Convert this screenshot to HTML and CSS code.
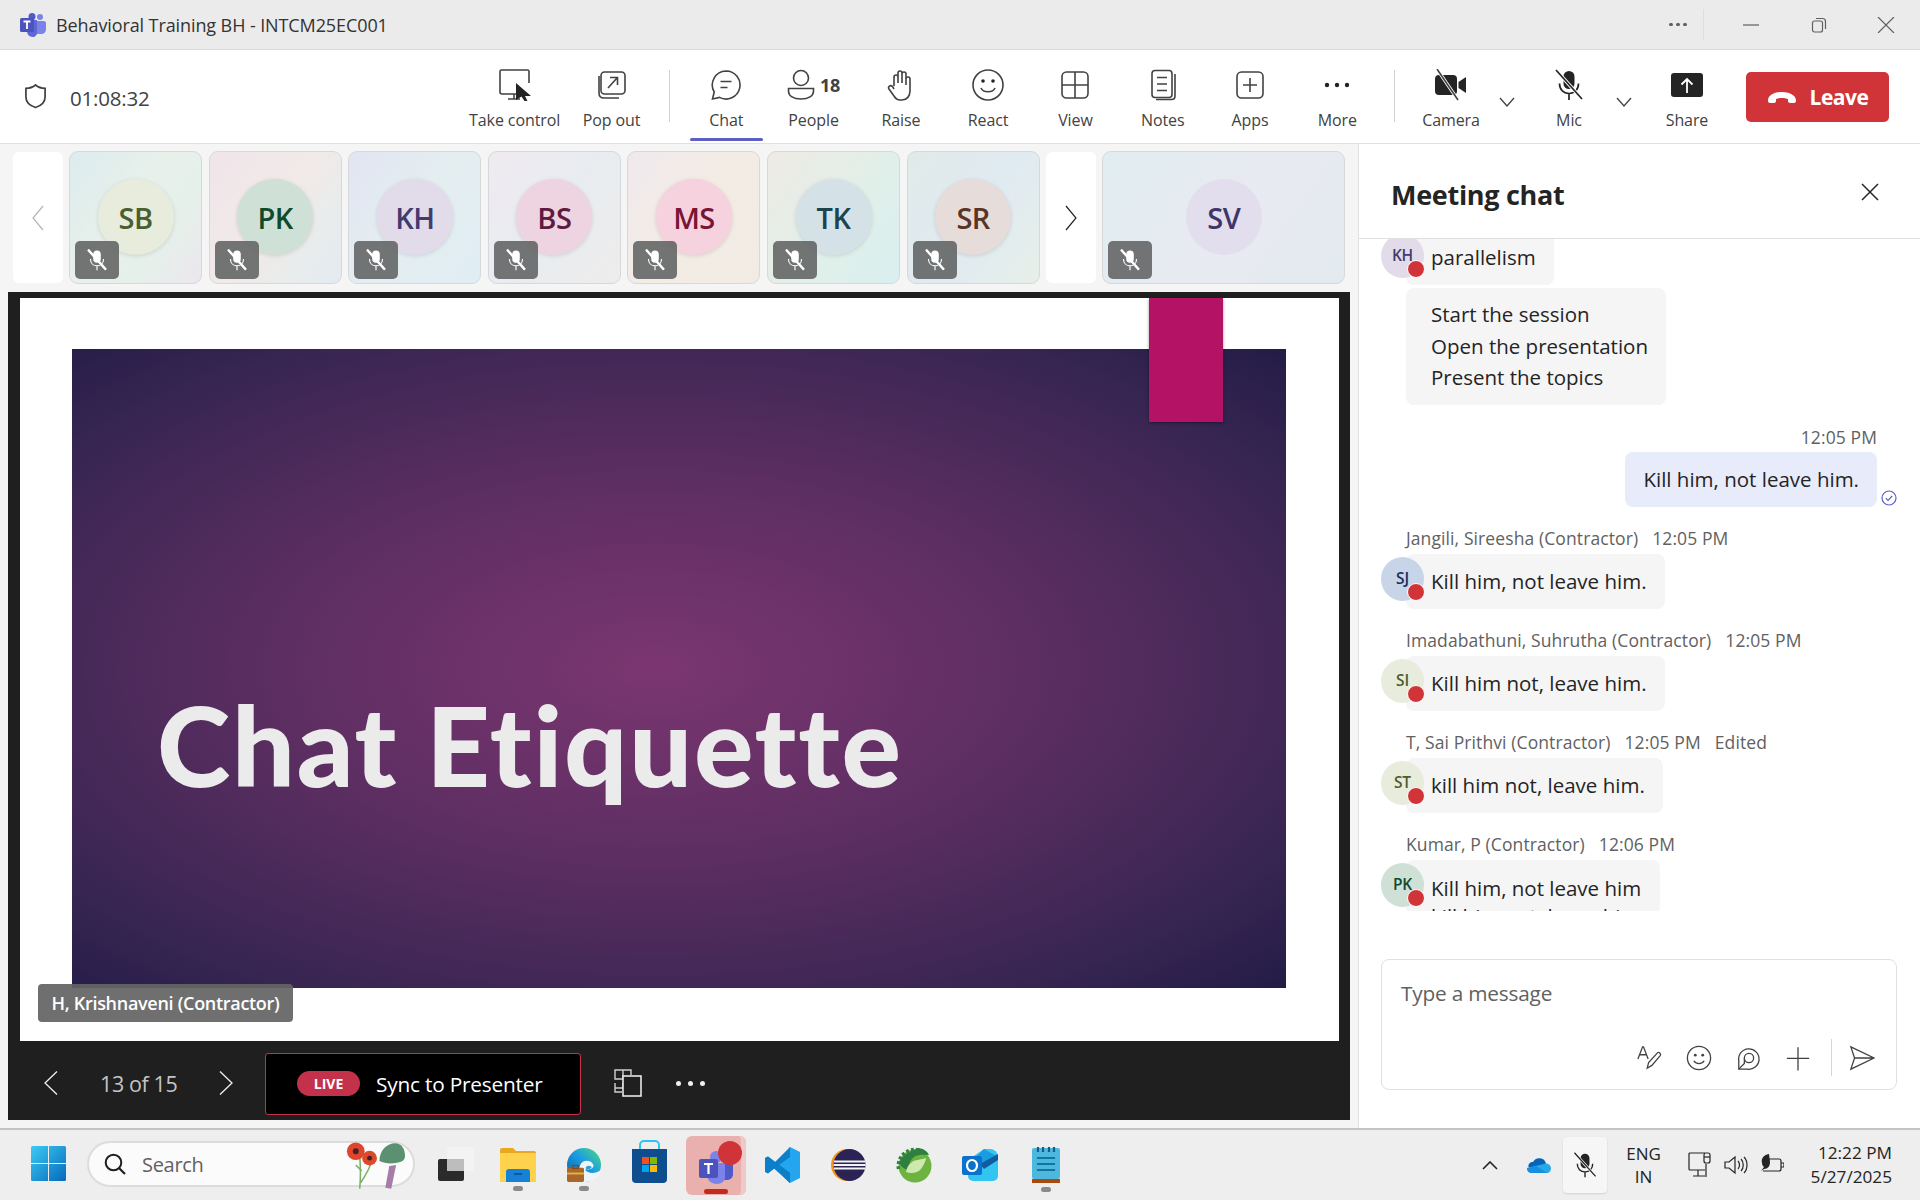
FILE: index.html
```html
<!DOCTYPE html>
<html lang="en">
<head>
<meta charset="utf-8">
<title>Behavioral Training BH - INTCM25EC001</title>
<link rel="stylesheet" href="styles.css">
</head>
<body>
<svg class="defs" aria-hidden="true">
  <symbol id="i-micoff" viewBox="0 0 32 32">
    <rect x="10.5" y="2" width="11" height="18" rx="5.5" fill="currentColor"/>
    <path d="M6.5 14.5c0 6 4 10 9.5 10s9.500-4 9.500-10M16 24.500V31" fill="none" stroke="currentColor" stroke-width="1.700"/>
    <path d="M3 1l26 29" stroke="#fff" stroke-width="3.400" class="slash"/>
    <path d="M3 1l26 29" stroke="currentColor" stroke-width="1.700"/>
  </symbol>
</svg>

<header class="titlebar">
  <svg class="teams-logo" viewBox="0 0 26 24"><circle cx="20" cy="4" r="3" fill="#7b83eb"/><path d="M15 8h9c1 0 2 1 2 2v6c0 3-2 5-5 5h-6z" fill="#7b83eb"/><circle cx="12" cy="3.500" r="3.500" fill="#5059c9"/><path d="M7 7h10v13c0 2-2 4-4 4-4 0-6-3-6-6z" fill="#5f67d6"/><rect x="0" y="5" width="14" height="14" rx="1.500" fill="#4b53bc"/><path d="M3.500 8.500h7M7 8.500v7.500" stroke="#fff" stroke-width="1.800" fill="none"/></svg>
  <span class="title">Behavioral Training BH - INTCM25EC001</span>
  <div class="win-controls">
    <span class="win-dots"><i></i><i></i><i></i></span>
    <span class="win-sep"></span>
    <svg class="win-ico w-min" viewBox="0 0 16 16"><path d="M0 8h16" stroke="#5f5f5f" stroke-width="1.200"/></svg>
    <svg class="win-ico w-max" viewBox="0 0 16 16"><rect x="1.500" y="4" width="10" height="11" rx="2" fill="none" stroke="#5f5f5f" stroke-width="1.200"/><path d="M5 1.500h6.500a3 3 0 0 1 3 3V12" fill="none" stroke="#5f5f5f" stroke-width="1.200"/></svg>
    <svg class="win-ico w-close" viewBox="0 0 16 16"><path d="M0 0l16 16M16 0L0 16" stroke="#5f5f5f" stroke-width="1.200"/></svg>
  </div>
</header>

<nav class="toolbar">
  <svg class="shield" viewBox="0 0 24 26"><path d="M12 1.500c3 2.500 6 3.500 10 3.500v9c0 5-4 9-10 11C6 23 2 19 2 14V5c4 0 7-1 10-3.500z" fill="none" stroke="#424242" stroke-width="1.800"/></svg>
  <span class="clock">01:08:32</span>
  <div class="tools">
    <div class="tool tool-wide">
      <svg class="tico" viewBox="0 0 32 32"><path d="M21 25H3a2 2 0 0 1-2-2V2.500A1.500 1.500 0 0 1 2.500 1h26A1.500 1.500 0 0 1 30 2.500V14M9 30h12M15 25v5"/><path class="fill" d="M17 14l15 13h-6l2.500 5-3 0-3-4.500L17 31z"/></svg>
      <span>Take control</span>
    </div>
    <div class="tool tool-pop">
      <svg class="tico" viewBox="0 0 32 32"><rect x="5" y="3" width="24" height="22" rx="3.500"/><path d="M3 7v17c0 3 2 5 5 5h15M12 19l9-10M14 8.500h7.500V16"/></svg>
      <span>Pop out</span>
    </div>
    <span class="tsep"></span>
    <div class="tool tool-chat">
      <svg class="tico" viewBox="0 0 32 32"><path d="M16 2a14 14 0 1 1-6.500 26.400L2.500 30l1.700-7A14 14 0 0 1 16 2z"/><path d="M10.500 12.500h11M10.500 18.500h7"/></svg>
      <span>Chat</span>
      <i class="active-bar"></i>
    </div>
    <div class="tool">
      <div class="tool-top">
        <svg class="tico tico-p" viewBox="0 0 28 32"><circle cx="14" cy="9" r="7.500"/><path d="M1.500 19.500h25V22c0 5-5 8-12.500 8S1.500 27 1.500 22z"/></svg>
        <b class="count">18</b>
      </div>
      <span>People</span>
    </div>
    <div class="tool">
      <svg class="tico" viewBox="0 0 32 32"><path d="M9 17V8a2 2 0 0 1 4 0v6M13 14V4a2 2 0 0 1 4 0v10M17 14V5a2 2 0 0 1 4 0v11M21 16v-6a2 2 0 0 1 4 0v12c0 5-3 9-8 9h-2c-3 0-4.500-1.500-6-4l-5-7c-1.500-2.500 1.500-4.500 3.500-2.500L9 20"/></svg>
      <span>Raise</span>
    </div>
    <div class="tool">
      <svg class="tico" viewBox="0 0 32 32"><circle cx="16" cy="16" r="15"/><path d="M9 19c2 5 12 5 14 0"/><circle class="fill" cx="11" cy="12" r="1.800"/><circle class="fill" cx="21" cy="12" r="1.800"/></svg>
      <span>React</span>
    </div>
    <div class="tool">
      <svg class="tico" viewBox="0 0 32 32"><rect x="3" y="3" width="26" height="26" rx="4.500"/><path d="M16 3v26M3 16h26"/></svg>
      <span>View</span>
    </div>
    <div class="tool">
      <svg class="tico" viewBox="0 0 32 32"><rect x="5" y="1.500" width="20" height="27" rx="3"/><path d="M28 5v22c0 2-1.500 3.500-3.500 3.500H9M10 8.500h10M10 15h10M10 21.500h10"/></svg>
      <span>Notes</span>
    </div>
    <div class="tool">
      <svg class="tico" viewBox="0 0 32 32"><rect x="3" y="3" width="26" height="26" rx="4.500"/><path d="M16 9v14M9 16h14"/></svg>
      <span>Apps</span>
    </div>
    <div class="tool">
      <svg class="tico" viewBox="0 0 32 32"><circle class="fill" cx="6" cy="16" r="2.200"/><circle class="fill" cx="16" cy="16" r="2.200"/><circle class="fill" cx="26" cy="16" r="2.200"/></svg>
      <span>More</span>
    </div>
    <span class="tsep tsep2"></span>
    <div class="tool tool-cam">
      <svg class="tico" viewBox="0 0 32 32"><rect class="fill" x="0" y="6" width="22" height="20" rx="4"/><path class="fill" d="M23.500 13L31 8v16l-7.500-5z"/><path class="halo" d="M2 0l21 31"/><path d="M2 0l21 31"/></svg>
      <span>Camera</span>
    </div>
    <svg class="caret" viewBox="0 0 16 10"><path d="M1 1l7 8 7-8" fill="none" stroke="#424242" stroke-width="1.300"/></svg>
    <div class="tool tool-mic">
      <svg class="tico-mic" viewBox="0 0 32 32"><use href="#i-micoff"/></svg>
      <span>Mic</span>
    </div>
    <svg class="caret" viewBox="0 0 16 10"><path d="M1 1l7 8 7-8" fill="none" stroke="#424242" stroke-width="1.300"/></svg>
    <div class="tool tool-share">
      <svg class="tico" viewBox="0 0 32 32"><rect class="fill" x="0" y="4" width="32" height="24" rx="3"/><path class="white" d="M16 24V10M10.500 15.500L16 10l5.500 5.500"/></svg>
      <span>Share</span>
    </div>
    <button class="leave"><svg viewBox="0 0 30 13"><path fill="#fff" d="M1 9.500C1 4 8 1 15 1s14 3 14 8.500V10c0 1-1 2-2 2h-4c-1 0-2-1-2-2V8c-3-1.500-9-1.500-12 0v2c0 1-1 2-2 2H3c-1 0-2-1-2-2z"/></svg>Leave</button>
  </div>
</nav>

<main class="main">
  <section class="left">
    <div class="strip">
      <div class="nav-btn"><svg viewBox="0 0 12 26"><path d="M11 1L1 13l10 12" fill="none" stroke="#b5b5b5" stroke-width="1.200"/></svg></div>
      <div class="thumb t1"><span class="ava a-sb">SB</span><span class="mute"><svg viewBox="0 0 32 32"><use href="#i-micoff"/></svg></span></div>
      <div class="thumb t2"><span class="ava a-pk">PK</span><span class="mute"><svg viewBox="0 0 32 32"><use href="#i-micoff"/></svg></span></div>
      <div class="thumb t3"><span class="ava a-kh">KH</span><span class="mute"><svg viewBox="0 0 32 32"><use href="#i-micoff"/></svg></span></div>
      <div class="thumb t4"><span class="ava a-bs">BS</span><span class="mute"><svg viewBox="0 0 32 32"><use href="#i-micoff"/></svg></span></div>
      <div class="thumb t5"><span class="ava a-ms">MS</span><span class="mute"><svg viewBox="0 0 32 32"><use href="#i-micoff"/></svg></span></div>
      <div class="thumb t6"><span class="ava a-tk">TK</span><span class="mute"><svg viewBox="0 0 32 32"><use href="#i-micoff"/></svg></span></div>
      <div class="thumb t7"><span class="ava a-sr">SR</span><span class="mute"><svg viewBox="0 0 32 32"><use href="#i-micoff"/></svg></span></div>
      <div class="nav-btn"><svg viewBox="0 0 12 26"><path d="M1 1l10 12L1 25" fill="none" stroke="#242424" stroke-width="1.200"/></svg></div>
      <div class="thumb thumb-wide t8"><span class="ava a-sv">SV</span><span class="mute"><svg viewBox="0 0 32 32"><use href="#i-micoff"/></svg></span></div>
    </div>

    <div class="stage">
      <div class="slide">
        <div class="deck"><h1 class="deck-title">Chat Etiquette</h1></div>
        <div class="bookmark"></div>
        <div class="nametag">H, Krishnaveni (Contractor)</div>
      </div>
      <div class="slidebar">
        <svg class="sb-chev" viewBox="0 0 14 24"><path d="M13 0.500L1 12l12 11.500" fill="none" stroke="#f0f0f0" stroke-width="1.300"/></svg>
        <span class="pages">13 of 15</span>
        <svg class="sb-chev sb-next" viewBox="0 0 14 24"><path d="M1 0.500L13 12 1 23.500" fill="none" stroke="#f0f0f0" stroke-width="1.300"/></svg>
        <div class="sync"><span class="live">LIVE</span><span>Sync to Presenter</span></div>
        <svg class="sb-grid" viewBox="0 0 28 28"><path d="M9 10H1V1h8zM9 6V1h8v5M1 19h8v-5M1 14v9h7" fill="none" stroke="#d0d0d0" stroke-width="1.400"/><rect x="9" y="7" width="18" height="20" fill="#1f1f1f" stroke="#e8e8e8" stroke-width="1.600"/></svg>
        <span class="sb-dots"><i></i><i></i><i></i></span>
      </div>
    </div>
  </section>

  <aside class="chat">
    <div class="chat-head">
      <h2>Meeting chat</h2>
      <svg viewBox="0 0 18 18"><path d="M1 1l16 16M17 1L1 17" stroke="#242424" stroke-width="1.500"/></svg>
    </div>
    <div class="msgs">
      <div class="msg msg-first">
        <span class="cava cava-first c-kh">KH<i class="dot"></i></span>
        <div class="bubble b-first">parallelism</div>
      </div>
      <div class="msg"><div class="bubble b-multi">Start the session<br>Open the presentation<br>Present the topics</div></div>
      <div class="mine-time">12:05 PM</div>
      <div class="mine">
        <div class="bubble bubble-me">Kill him, not leave him.</div>
        <svg class="seen" viewBox="0 0 16 16"><circle cx="8" cy="8" r="7" fill="none" stroke="#5b5fc7" stroke-width="1.200"/><path d="M4.800 8.200l2.200 2.200 4.200-4.400" fill="none" stroke="#5b5fc7" stroke-width="1.200"/></svg>
      </div>
      <div class="meta">Jangili, Sireesha (Contractor)<span>12:05 PM</span></div>
      <div class="msg">
        <span class="cava c-sj">SJ<i class="dot"></i></span>
        <div class="bubble">Kill him, not leave him.</div>
      </div>
      <div class="meta">Imadabathuni, Suhrutha (Contractor)<span>12:05 PM</span></div>
      <div class="msg">
        <span class="cava c-si">SI<i class="dot"></i></span>
        <div class="bubble">Kill him not, leave him.</div>
      </div>
      <div class="meta">T, Sai Prithvi (Contractor)<span>12:05 PM</span><span>Edited</span></div>
      <div class="msg">
        <span class="cava c-st">ST<i class="dot"></i></span>
        <div class="bubble">kill him not, leave him.</div>
      </div>
      <div class="meta">Kumar, P (Contractor)<span>12:06 PM</span></div>
      <div class="msg msg-last">
        <span class="cava c-pk">PK<i class="dot"></i></span>
        <div class="bubble">Kill him, not leave him<br>kill him not, leave him</div>
      </div>
    </div>
    <div class="compose">
      <div class="placeholder">Type a message</div>
      <div class="compose-tools">
        <svg class="cico" viewBox="0 0 28 28"><path d="M1 15L6 2h1l5 13M3 10.500h7"/><path d="M11 25l1.500-6L22 8.500c1.500-1.500 4.500 1 3 3L16 22z"/></svg>
        <svg class="cico" viewBox="0 0 28 28"><circle cx="14" cy="14" r="12.500"/><path d="M8.500 17c2 4 9 4 11 0"/><circle class="cfill" cx="10" cy="11" r="1.500"/><circle class="cfill" cx="18" cy="11" r="1.500"/></svg>
        <svg class="cico" viewBox="0 0 28 28"><path d="M3 26v-9a11 11 0 1 1 9 9z"/><circle cx="14" cy="14" r="5"/><path d="M9 14v6l-6 6"/></svg>
        <svg class="cico" viewBox="0 0 28 28"><path d="M14 2.500v25M2 14.500h24"/></svg>
        <span class="csep"></span>
        <svg class="cico cico-send" viewBox="0 0 28 28"><path d="M2 2l25 12L2 26l4-12zM6 14h21"/></svg>
      </div>
    </div>
  </aside>
</main>

<footer class="taskbar">
  <svg class="start" viewBox="0 0 35 35"><defs><linearGradient id="g-win" x1="0" y1="0" x2="1" y2="1"><stop offset="0" stop-color="#3ccbf4"/><stop offset="1" stop-color="#0669bc"/></linearGradient></defs><path fill="url(#g-win)" d="M0 1.500A1.500 1.500 0 0 1 1.500 0H17v17H0zM18 0h15.500A1.500 1.500 0 0 1 35 1.500V17H18zM0 18h17v17H1.500A1.500 1.500 0 0 1 0 33.500zM18 18h17v15.500a1.500 1.500 0 0 1-1.500 1.500H18z"/></svg>
  <div class="search">
    <svg class="s-ico" viewBox="0 0 22 22"><circle cx="9.500" cy="9.500" r="7.800" fill="none" stroke="#1f1f1f" stroke-width="2"/><path d="M15 15l6 6" stroke="#1f1f1f" stroke-width="2.200"/></svg>
    <span class="s-text">Search</span>
    <svg class="s-art" viewBox="0 0 64 50"><path d="M18 14c1 14 1 24 0 34M31 18c-3 10-8 18-12 24M20 30c-2-2-4-4-6-6" fill="none" stroke="#7fb069" stroke-width="1.600"/><circle cx="14" cy="10" r="9" fill="#e0452c"/><circle cx="14" cy="10" r="3" fill="#41212b"/><circle cx="28" cy="17" r="7.500" fill="#dc4a2c"/><circle cx="28" cy="17" r="2.500" fill="#41212b"/><path d="M38 20c0-11 8-18 16-18 6 0 10 5 10 13 0 3-2 5-5 6-6 2-15 2-21-1z" fill="#5b9070"/><path d="M48 25l-4 22 6 1 5-24z" fill="#a77ca8"/></svg>
  </div>
  <svg class="tb tb-view" viewBox="0 0 36 34"><rect x="0" y="12" width="26" height="22" rx="2" fill="#2b2b2b"/><rect x="9" y="0" width="27" height="24" rx="2" fill="#f3f3f3"/><rect x="9" y="12" width="17" height="12" fill="#bdbdbd"/></svg>
  <div class="app"><svg class="tb" viewBox="0 0 36 34"><path d="M0 2a2 2 0 0 1 2-2h11l3 3h18a2 2 0 0 1 2 2v29H0z" fill="#e9a820"/><rect x="0" y="5" width="36" height="29" rx="1" fill="#ffd24d"/><path d="M6 34V24a3 3 0 0 1 3-3h18a3 3 0 0 1 3 3v10z" fill="#1582d8"/><path d="M14 26h8" stroke="#0b4f8a" stroke-width="1.600"/></svg><i class="run"></i></div>
  <div class="app"><svg class="tb" viewBox="0 0 36 36"><defs><linearGradient id="g-edge" x1="0" y1="1" x2="1" y2="0"><stop offset="0" stop-color="#0c59a4"/><stop offset=".55" stop-color="#1b9de2"/><stop offset="1" stop-color="#4fdc7c"/></linearGradient></defs><circle cx="18" cy="18" r="18" fill="url(#g-edge)"/><path d="M14 18c2-6 12-6 14 0 1 4-5 5-9 5 3 4 11 5 17 0-1 7-8 13-17 13-2 0-4-1-5-3-2-4-2-10 0-15z" fill="#eef5f8"/><path d="M20 20c3-2 6-1 6 1-1 1-4 2-6 2z" fill="#2aa0d8"/><rect x="0" y="21" width="18" height="15" rx="1.500" fill="#a9672a"/><rect x="0" y="26" width="18" height="2" fill="#e8b04a"/><rect x="6" y="18.500" width="6" height="3" fill="none" stroke="#7c4a1c" stroke-width="1.200"/></svg><i class="run"></i></div>
  <div class="app"><svg class="tb tb-store" viewBox="0 0 35 44"><path d="M8 10V5a4 4 0 0 1 4-4h11a4 4 0 0 1 4 4v5" fill="none" stroke="#2ec4f0" stroke-width="2"/><path d="M0 9h35v30a4 4 0 0 1-4 4H4a4 4 0 0 1-4-4z" fill="#0f4e8e"/><rect x="10" y="17" width="7" height="7" fill="#f25022"/><rect x="18" y="17" width="7" height="7" fill="#7fba00"/><rect x="10" y="25" width="7" height="7" fill="#00a4ef"/><rect x="18" y="25" width="7" height="7" fill="#ffb900"/></svg></div>
  <div class="teams-app">
    <svg class="tb-teams" viewBox="0 0 36 36"><circle cx="26" cy="10" r="5" fill="#7b83eb"/><path d="M20 16h14v10c0 4-3 6-7 6h-7z" fill="#5059c9"/><circle cx="17" cy="9" r="6" fill="#7b83eb"/><path d="M8 15h18v15c0 3-4 6-8 6-6 0-10-4-10-9z" fill="#7b83eb"/><rect x="0" y="11" width="19" height="19" rx="2" fill="#4b53bc"/><path d="M5 16h9M9.500 16v10" stroke="#fff" stroke-width="2.200" fill="none"/></svg>
    <i class="badge-red"></i>
    <i class="teams-run"></i>
  </div>
  <svg class="tb tb-code" viewBox="0 0 36 36"><path d="M26 0l10 5v26l-10 5-15-15z" fill="#24a6ee"/><path d="M26 0l-15 15L4 9.500 1 11v14l3 1.500 7-5.500 15 15V26L15 18 26 10z" fill="#0b7fc9"/><path d="M1 11l3-1.500L26 26v10L4 16z M1 25V11l10 7z" fill="#0b7fc9"/></svg>
  <svg class="tb tb-ecl" viewBox="0 0 36 32"><circle cx="17" cy="16" r="16" fill="#f7941e"/><circle cx="19.500" cy="16" r="16" fill="#2b2255"/><path d="M4 12.500h31M3.500 16h32M4 19.500h31" stroke="#f2f2f2" stroke-width="1.800"/></svg>
  <svg class="tb tb-spr" viewBox="0 0 36 36"><circle cx="19" cy="19" r="16.500" fill="#6db33f"/><path d="M3 15c3-3 3-5 6-7 2-2 4-2 6-4 3-1 6-3 8-3 5 1 8 3 10 7-5 0-10-1-15 2-4 3-5 7-6 13-3-1-5-2-7-4-1-1-2-3-2-4z" fill="#2f8040"/><path d="M2.500 22A16.500 16.500 0 0 1 30 7" fill="none" stroke="#2f8040" stroke-width="3.500" stroke-dasharray="2.800 2.200"/><path d="M10 25c5 2 12 1 15-3 3-4 5-9 5-11-4 2-10 1-14 4-4 3-5 6-6 10z" fill="#cfe8b0"/></svg>
  <svg class="tb tb-out" viewBox="0 0 36 32"><path d="M6 11L22 0h6a8 8 0 0 1 8 8v19a5 5 0 0 1-5 5H11a5 5 0 0 1-5-5z" fill="#33c5f2"/><path d="M22 0l14 8-14 9-12-5z" fill="#1a9ce0"/><path d="M18 15L36 5v6l-14 9z" fill="#0f5c9e"/><rect x="0" y="7" width="20" height="19" rx="2" fill="#0a72cb"/><ellipse cx="10" cy="16.500" rx="5" ry="5.500" fill="none" stroke="#fff" stroke-width="2.200"/></svg>
  <div class="app app-note"><svg class="tb tb-note" viewBox="0 0 28 36"><rect x="0" y="1" width="28" height="31" rx="2" fill="#4cb8dd"/><rect x="0" y="32" width="28" height="4" fill="#a8490f"/><path d="M6 0v5M11 0v5M17 0v5M22 0v5" stroke="#135d88" stroke-width="2.200"/><path d="M5 11h18M5 17h18M5 23h18" stroke="#11759f" stroke-width="1.800"/></svg><i class="run"></i></div>

  <div class="tray">
    <svg class="t-chev" viewBox="0 0 16 9"><path d="M1 8l7-7 7 7" fill="none" stroke="#242424" stroke-width="1.600"/></svg>
    <svg class="t-cloud" viewBox="0 0 24 16"><path d="M6 5a7 7 0 0 1 13 1.500L10 13 1.500 10C1 7 3 5 6 5z" fill="#0364b8"/><path d="M19 6.500c3 0 5 2.500 5 5 0 2-1.500 4.500-4 4.500H5c-3 0-5-2-5-5z" fill="#28a8ea"/><path d="M0 11l9-2 11 7H5c-3 0-5-2-5-5z" fill="#1490df"/></svg>
    <div class="t-mic"><svg viewBox="0 0 32 32"><use href="#i-micoff"/></svg></div>
    <div class="t-lang">ENG<br>IN</div>
    <svg class="t-ico t-net" viewBox="0 0 24 26"><path d="M17 18H2a1 1 0 0 1-1-1V2a1 1 0 0 1 1-1h15M5 24h12M10 18v6M18 25V12"/><rect x="16" y="1" width="6" height="10" rx="2"/><path d="M16 5h6"/></svg>
    <svg class="t-ico t-vol" viewBox="0 0 24 22"><path d="M1 8v6h4l6 5V3L5 8zM14 7c2 2 2 6 0 8M17 5c3 3 3 9 0 12M20 3c4 4 4 12 0 16"/></svg>
    <svg class="t-ico t-bat" viewBox="0 0 24 22"><path d="M8 5h11a2 2 0 0 1 2 2v8a2 2 0 0 1-2 2H3M21 9h3v4h-3"/><path class="tfill" d="M9 0C3 1 1 5 2 9c0 2 1 3 2 4l-3 4 3-2c4 0 6-3 6-7z"/></svg>
    <div class="t-clock">12:22 PM<br>5/27/2025</div>
  </div>
</footer>
</body>
</html>
```
FILE: styles.css
```css
* { box-sizing: border-box; }
html, body { margin: 0; height: 100%; }
body {
  width: 1920px; height: 1200px; overflow: hidden;
  display: flex; flex-direction: column;
  font-family: "Open Sans", "Noto Sans", sans-serif;
  color: #242424; background: #f5f5f5;
}
.defs { position: absolute; width: 0; height: 0; }
i { font-style: normal; display: block; }

/* title bar */
.titlebar {
  height: 50px; flex: none; display: flex; align-items: center;
  padding-left: 20px; background: #ebebeb; border-bottom: 1px solid #dcdcdc;
}
.teams-logo { width: 26px; height: 24px; }
.title { margin-left: 10px; font-size: 18px; color: #333; letter-spacing: -.1px; }
.win-controls { margin-left: auto; display: flex; align-items: center; height: 100%; }
.win-dots { display: flex; gap: 3.500px; }
.win-dots i { width: 3.500px; height: 3.500px; border-radius: 50%; background: #5f5f5f; }
.win-sep { width: 1px; height: 31px; background: #dedede; margin-left: 16px; }
.win-ico { width: 16px; height: 16px; }
.w-min { margin-left: 39px; }
.w-max { margin-left: 52px; }
.w-close { margin-left: 50.500px; margin-right: 25px; width: 18px; }

/* toolbar */
.toolbar {
  height: 94px; flex: none; display: flex; align-items: flex-start;
  background: #fff; border-bottom: 1px solid #e0e0e0; padding-right: 31px;
}
.shield { width: 23px; height: 26px; margin: 33px 0 0 24px; }
.clock { margin: 34px 0 0 23px; font-size: 20.500px; line-height: 28px; color: #424242; letter-spacing: -.2px; }
.tools { margin-left: auto; display: flex; align-items: flex-start; }
.tool {
  position: relative; width: 87.300px; height: 93px; padding-top: 19px;
  display: flex; flex-direction: column; align-items: center;
  font-size: 16px; color: #424242; letter-spacing: -.1px;
}
.tool > span { line-height: 20px; margin-top: 8.500px; white-space: nowrap; }
.tool-wide { width: 108px; }
.tool-pop { width: 86px; }
.tool-cam { width: 88px; }
.tool-mic { width: 86px; margin-left: 7px; }
.tool-share { width: 88px; margin-left: 7px; margin-right: 15px; }
.tico, .tico-mic { width: 32px; height: 32px; flex: none; fill: none; stroke: #424242; stroke-width: 1.600; }
.tico-mic { color: #242424; stroke: none; }
.tico .fill { fill: #242424; stroke: none; }
.tico .white { stroke: #fff; stroke-width: 1.800; }
.tico .halo { stroke: #fff; stroke-width: 3.200; }
.tool-top { display: flex; align-items: center; padding-left: 0; }
.tico-p { width: 28px; }
.count { font-size: 18px; font-weight: 700; color: #424242; margin-left: 5px; }
.active-bar { position: absolute; left: 7px; right: 7px; bottom: 2px; height: 3px; border-radius: 2px; background: #5b5fc7; }
.tsep { width: 1px; height: 52px; margin: 20px 13px 0 14px; background: #d1d1d1; flex: none; }
.tsep2 { margin: 20px 12px 0 13px; }
.caret { width: 16px; height: 10px; margin: 47px 4px 0; flex: none; }
.leave {
  width: 143px; height: 50px; margin-top: 22px; padding-top: 2px; border: 0; border-radius: 5px;
  display: flex; align-items: center; justify-content: center; gap: 13px;
  background: #d13438; color: #fff;
  font: 700 21px/1 "Open Sans", sans-serif; letter-spacing: -.5px;
}
.leave svg { width: 30px; height: 13px; }

/* main */
.main { flex: 1; min-height: 0; display: flex; }
.left { width: 1358px; flex: none; padding: 7px 8px 8px; display: flex; flex-direction: column; gap: 8px; background: #f5f5f5; }

.strip { height: 133px; flex: none; display: flex; gap: 6.600px; padding-left: 5px; align-items: center; }
.nav-btn { width: 49.500px; height: 131px; background: #fff; border-radius: 6px; display: flex; align-items: center; justify-content: center; flex: none; }
.nav-btn svg { width: 12px; height: 26px; }
.thumb {
  position: relative; width: 133px; height: 133px; flex: none; border: 1px solid #d6d9dc; border-radius: 9px;
  display: flex; align-items: center; justify-content: center;
}
.thumb-wide { width: 243px; }
.t1 { background: linear-gradient(125deg, #dcecee, #e8f0ea 45%, #e5f0ea 70%, #ece6ee); }
.t2 { background: linear-gradient(125deg, #f0e5ea, #f0eae8 50%, #e8ecec 75%, #e4eaf0); }
.t3 { background: linear-gradient(125deg, #e2e5f2, #e4eef0 50%, #e0edf4); }
.t4 { background: linear-gradient(125deg, #efeaf0, #e8ecf0 50%, #eeecec); }
.t5 { background: linear-gradient(125deg, #efe9ee, #f3ece4 50%, #f2ebe4); }
.t6 { background: linear-gradient(125deg, #eeeae4, #e2efe8 50%, #d9eff0); }
.t7 { background: linear-gradient(125deg, #e0ebe8, #e0eaf2 50%, #e6efe8); }
.t8 { background: linear-gradient(125deg, #e1edf0, #e8eaf0 60%, #e2eaf0); }
.ava {
  width: 76px; height: 76px; border-radius: 50%; display: flex; align-items: center; justify-content: center;
  font-size: 29px; font-weight: 600; letter-spacing: -.5px; box-shadow: 0 1px 4px rgba(0,0,0,.12); margin-top: -1px;
}
.a-sb { background: #e7ecdc; color: #4a5e2f; }
.a-pk { background: #cfe0d6; color: #0e4a2c; }
.a-kh { background: #e2dcea; color: #433b6e; }
.a-bs { background: #edd4e0; color: #5e1a40; }
.a-ms { background: #f5d2de; color: #7a1535; }
.a-tk { background: #d4e2e8; color: #1c4450; }
.a-sr { background: #e6dcd9; color: #5a3525; }
.a-sv { background: #e2deed; color: #3e3668; box-shadow: none; }
.mute {
  position: absolute; left: 5px; bottom: 4px; width: 44px; height: 38px; border-radius: 5px;
  background: rgba(100,102,102,.9); display: flex; align-items: center; justify-content: center; color: #fff;
}
.mute svg { width: 22px; height: 22px; color: #fff; }
.mute svg, .t-mic svg { overflow: visible; }

/* stage */
.stage { flex: 1; min-height: 0; display: flex; flex-direction: column; background: #1f1f1f; padding: 6px 11px 0 12px; }
.slide { position: relative; height: 743px; flex: none; background: #fff; padding: 51px 53px 53px 52px; }
.deck {
  height: 100%; padding: 340px 0 0 85px;
  background: radial-gradient(ellipse at 48% 50%, #7b3670 0%, #5d2e62 42%, #3a2653 78%, #231c47 100%);
}
.deck-title {
  margin: 0; font: 900 111px/1 "Lato", sans-serif; color: #ebebeb; letter-spacing: 1.800px; white-space: nowrap;
}
.bookmark { position: absolute; top: 0; left: 1129px; width: 74px; height: 124px; background: #b41264; box-shadow: 0 1px 3px rgba(0,0,0,.4); }
.nametag {
  position: absolute; left: 18px; bottom: 19px; height: 38px; width: 255px; border-radius: 4px;
  background: rgba(100,100,100,.93); color: #fff; display: flex; align-items: center; justify-content: center;
  font-size: 18px; font-weight: 600; letter-spacing: -.3px; white-space: nowrap;
}
.slidebar { flex: 1; display: flex; align-items: center; color: #fff; margin: 0 -11px 0 -12px; padding-top: 5px; }
.sb-chev { width: 14px; height: 24px; margin-left: 36px; flex: none; }
.pages { margin-left: 42px; font-size: 21.500px; color: #c4c4c4; letter-spacing: -.4px; width: 80px; white-space: nowrap; }
.sb-next { margin-left: 39px; }
.sync {
  margin-left: 32px; width: 316px; height: 62px; flex: none; margin-top: 1px; background: #000; border: 1px solid #c4314b; border-radius: 3px;
  display: flex; align-items: center; padding-left: 31px; gap: 16px; font-size: 20.800px; letter-spacing: -.2px;
}
.live {
  width: 63px; height: 25px; border-radius: 13px; background: #c4314b; display: flex; align-items: center; justify-content: center;
  font-size: 14px; font-weight: 700; letter-spacing: 0;
}
.sb-grid { width: 28px; height: 28px; margin-left: 33px; flex: none; }
.sb-dots { display: flex; gap: 7px; margin-left: 34px; }
.sb-dots i { width: 5px; height: 5px; border-radius: 50%; background: #f0f0f0; }

/* chat */
.chat { flex: 1; min-width: 0; display: flex; flex-direction: column; background: #fff; border-left: 1px solid #e0e0e0; }
.chat-head { height: 95px; flex: none; display: flex; align-items: center; justify-content: space-between; padding: 6px 41px 0 32px; border-bottom: 1px solid #e0e0e0; }
.chat-head h2 { margin: 0; font-size: 27px; font-weight: 700; letter-spacing: -.3px; color: #242424; }
.chat-head svg { width: 18px; height: 18px; margin-top: -4px; }
.msgs { height: 672px; flex: none; overflow: hidden; padding-left: 47px; font-size: 20px; color: #242424; }
.msg { position: relative; display: flex; }
.bubble { background: #f5f5f5; border-radius: 8px; padding: 12px 18px 12px 25px; line-height: 31.500px; font-size: 20.500px; white-space: nowrap; }
.b-first { height: 46px; padding-top: 3px; border-radius: 0 0 8px 8px; }
.b-multi { margin-top: 3px; height: 117px; padding-top: 11px; }
.cava {
  position: absolute; left: -25px; top: 3px; width: 43px; height: 44px; border-radius: 50%; z-index: 1;
  font-size: 15.500px; font-weight: 600; display: flex; align-items: center; justify-content: center; padding-bottom: 2px; letter-spacing: -.2px;
}
.cava-first { top: -5px; }
.dot { position: absolute; right: -1px; bottom: 0; width: 18px; height: 18px; border-radius: 50%; background: #d13438; border: 1.500px solid #fff; }
.c-kh { background: #e2dcea; color: #433b6e; }
.c-sj { background: #c8d5e8; color: #1a2e5e; }
.c-si { background: #e7ecdc; color: #4a5e2f; }
.c-st { background: #e7ecdc; color: #4a5e2f; }
.c-pk { background: #cfe0d6; color: #0e4a2c; }
.mine-time { margin: 22px 43px 0 0; text-align: right; line-height: 20px; font-size: 17.500px; color: #616161; letter-spacing: .1px; }
.mine { position: relative; display: flex; justify-content: flex-end; margin: 5px 43px 0 0; }
.bubble-me { background: #e8ebfa; padding: 12px 18px; height: 55px; }
.seen { position: absolute; right: -20px; bottom: 1px; width: 16px; height: 16px; }
.meta { margin-top: 21px; height: 20px; line-height: 20px; margin-bottom: 6px; font-size: 17.500px; color: #616161; letter-spacing: .1px; white-space: nowrap; }
.meta span { margin-left: 14px; }
.msg > .bubble:not(.b-first):not(.b-multi) { height: 55px; }
.msg.msg-last > .bubble { height: 100px; line-height: 28.500px; padding-top: 13.500px; padding-right: 19px; }
.compose {
  margin: 48px 23px 0 22px; height: 131px; flex: none; border: 1px solid #e0e0e0; border-radius: 8px;
  display: flex; flex-direction: column; padding: 20px 19px 0;
}
.placeholder { font-size: 20.800px; line-height: 26px; color: #616161; letter-spacing: -.2px; }
.compose-tools { margin-top: auto; margin-bottom: 12.500px; display: flex; align-items: center; justify-content: flex-end; height: 38px; }
.cico { width: 26px; height: 26px; fill: none; stroke: #424242; stroke-width: 1.400; margin-left: 23.500px; }
.cico .cfill { fill: #424242; stroke: none; }
.csep { width: 1px; height: 37px; background: #d6d6d6; margin-left: 20px; }
.cico-send { margin-left: 17px; margin-right: 2px; }

/* taskbar */
.taskbar { height: 72px; flex: none; display: flex; align-items: center; background: #eeeeee; border-top: 2px solid #c4c4c4; position: relative; }
.start { width: 35px; height: 35px; margin-left: 31px; flex: none; margin-top: -3px; }
.search {
  margin-left: 21px; width: 328px; height: 46px; border-radius: 23px; background: #fbfbfb; border: 2px solid #dcdcdc; flex: none;
  display: flex; align-items: center; padding-left: 15px; margin-top: -2px;
}
.s-ico { width: 22px; height: 22px; }
.s-text { margin-left: 16px; font-size: 20px; color: #616161; letter-spacing: -.3px; }
.s-art { width: 63px; height: 50px; margin-left: auto; margin-right: 8px; margin-top: 4px; }
.tb { display: block; width: 36px; height: 34px; flex: none; }
.tb-view { margin-left: 22.500px; margin-top: -2px; }
.app { position: relative; flex: none; margin-left: 30px; }
.run { position: absolute; left: 50%; bottom: -9px; width: 10px; height: 5px; margin-left: -5px; border-radius: 3px; background: #8a8a8a; }
.tb-view + .app { margin-left: 26.500px; }
.tb-store { width: 35px; height: 44px; margin-top: -6px; }
.teams-app {
  position: relative; margin-left: 19px; width: 60px; height: 59px; flex: none; border-radius: 6px; background: #e9b0ae;
  box-shadow: inset -10px 0 0 -5px #efc9c7; display: flex; align-items: center; padding-left: 13px;
}
.tb-teams { width: 36px; height: 36px; margin-top: 2px; }
.badge-red { position: absolute; left: 32px; top: 5px; width: 24px; height: 24px; border-radius: 50%; background: #d13438; }
.teams-run { position: absolute; left: 18px; bottom: 1px; width: 24px; height: 5px; border-radius: 3px; background: #c42b1c; }
.tb-code { height: 36px; margin-left: 18px; }
.tb-ecl { height: 32px; margin-left: 30px; }
.tb-spr { height: 36px; margin-left: 30px; }
.tb-out { height: 32px; margin-left: 30px; }
.tb-note { width: 28px; height: 36px; }
.app-note { margin-left: 34px; }
.tray { margin-left: auto; display: flex; align-items: center; height: 100%; padding-right: 28px; }
.t-chev { width: 16px; height: 9px; margin-right: 0; }
.t-cloud { width: 24px; height: 16px; margin-left: 28.500px; }
.t-mic { margin-left: 12.500px; width: 44px; height: 56px; background: #f6f6f6; border-radius: 4px; box-shadow: 0 1px 2px rgba(0,0,0,.12); display: flex; align-items: center; justify-content: center; color: #242424; }
.t-mic svg { width: 26px; height: 26px; }
.t-mic .slash { stroke: #f6f6f6; }
.t-lang { margin-left: 18.500px; width: 36px; text-align: center; font-size: 17px; line-height: 23.500px; color: #242424; }
.t-ico { fill: none; stroke: #242424; stroke-width: 1.200; width: 24px; height: 26px; }
.t-net { margin-left: 26.500px; }
.t-vol { margin-left: 12px; height: 22px; }
.t-bat { margin-left: 12px; height: 22px; }
.t-bat .tfill { fill: #242424; stroke: none; }
.t-clock { margin-left: 26.500px; text-align: right; font-size: 17.200px; line-height: 24px; color: #242424; white-space: nowrap; }
```
